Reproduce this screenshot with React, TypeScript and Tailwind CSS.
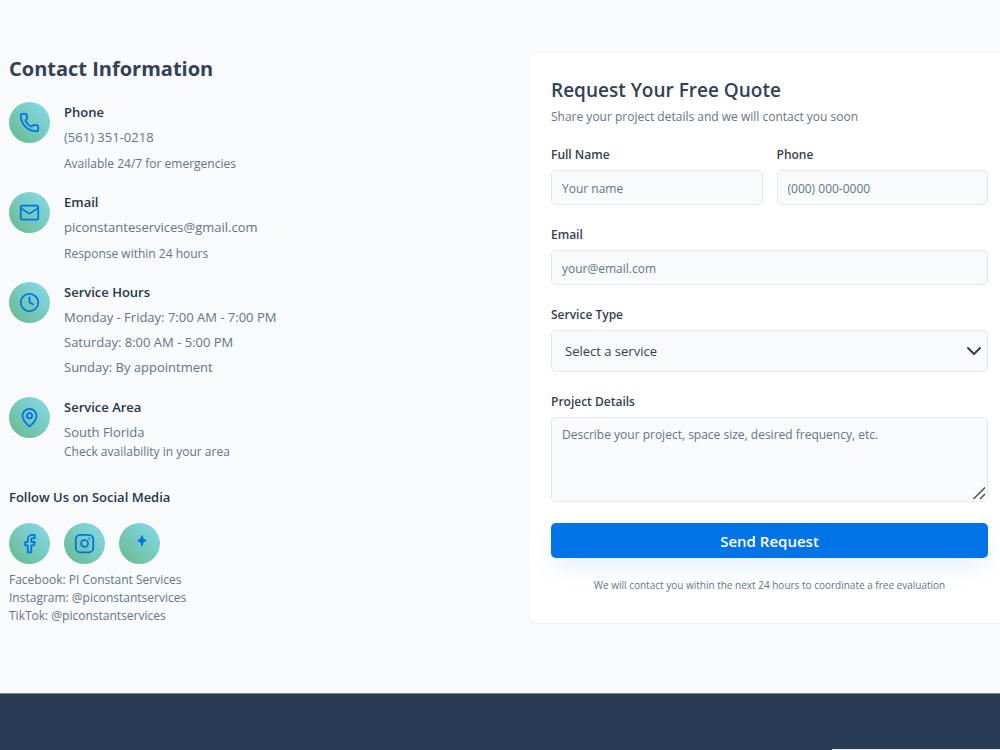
import { useState } from 'react'
import type { ReactNode } from 'react'
import { ChevronDown, Clock, Facebook, Instagram, Mail, MapPin, Phone } from 'lucide-react'

const services = ['Residential Cleaning', 'Commercial Cleaning', 'Deep Cleaning', 'Move In / Move Out']

const bubble =
  'flex size-[41px] shrink-0 items-center justify-center rounded-full bg-linear-to-tr from-[#68b88c] to-[#87dbee] text-[#0073e6]'
const label = 'mb-[6px] block text-xs leading-[18px] font-semibold text-[#334155]'
const field =
  'block w-full rounded-[5px] border border-[#e2e8f0] bg-[#f8fafc] text-[#334155] placeholder:text-[#64748b] outline-none focus:border-[#0073e6]'
const input = `${field} h-[35px] px-[10px] pt-px text-xs`

function ContactItem({ icon, title, children }: { icon: ReactNode; title: string; children: ReactNode }) {
  return (
    <li className="flex gap-[14px]">
      <div className={bubble}>{icon}</div>
      <div>
        <h3 className="mb-0.5 text-[13px] leading-[21px] font-semibold text-[#27364b]">{title}</h3>
        {children}
      </div>
    </li>
  )
}

function TikTokIcon() {
  return (
    <svg viewBox="0 0 21 21" className="size-[21px]" fill="currentColor">
      <path d="M13 2 C13.8 2 14 4.6 14.6 5.6 C15.4 6.6 17.5 6.8 17.5 7.6 C17.5 8.4 15.4 8.6 14.6 9.6 C14 10.6 13.8 13.4 13 13.4 C12.2 13.4 12 10.6 11.4 9.6 C10.6 8.6 8.5 8.4 8.5 7.6 C8.5 6.8 10.6 6.6 11.4 5.6 C12 4.6 12.2 2 13 2Z" />
    </svg>
  )
}

function ResizeGrip() {
  return (
    <svg
      viewBox="0 0 16 16"
      className="pointer-events-none absolute right-px bottom-px size-4 bg-[#f8fafc]"
      fill="none"
      stroke="#4b4f55"
      strokeWidth="1.5"
    >
      <path d="M2.5 14 L14 2.5 M9 14 L14 9" />
    </svg>
  )
}

export default function App() {
  const [service, setService] = useState('')

  return (
    <div className="min-h-screen overflow-x-hidden bg-[#f8fafc] font-['Open_Sans','Noto_Sans',sans-serif] text-[#64748b]">
      <section className="-mr-[9px] grid grid-cols-2 items-start gap-[42px] pt-[53px] pb-[68px] pl-[9px]">
        <div>
          <h2 className="mb-[17px] text-xl leading-8 font-bold text-[#334155]">Contact Information</h2>

          <ul className="space-y-[18px]">
            <ContactItem icon={<Phone size={21} />} title="Phone">
              <p className="text-[13px] leading-6">(561) 351-0218</p>
              <p className="mt-1 text-xs leading-[21px]">Available 24/7 for emergencies</p>
            </ContactItem>
            <ContactItem icon={<Mail size={21} />} title="Email">
              <p className="text-[13px] leading-6">piconstanteservices@gmail.com</p>
              <p className="mt-1 text-xs leading-[21px]">Response within 24 hours</p>
            </ContactItem>
            <ContactItem icon={<Clock size={21} />} title="Service Hours">
              <div className="space-y-px text-[13px] leading-6">
                <p>Monday - Friday: 7:00 AM - 7:00 PM</p>
                <p>Saturday: 8:00 AM - 5:00 PM</p>
                <p>Sunday: By appointment</p>
              </div>
            </ContactItem>
            <ContactItem icon={<MapPin size={21} />} title="Service Area">
              <p className="text-[13px] leading-6">South Florida</p>
              <p className="text-xs leading-4">Check availability in your area</p>
            </ContactItem>
          </ul>

          <h3 className="mt-[27px] mb-[15px] text-[13px] leading-[21px] font-semibold text-[#27364b]">
            Follow Us on Social Media
          </h3>
          <div className="mb-[7px] flex gap-[14px]">
            <a href="#facebook" aria-label="Facebook" className={bubble}>
              <Facebook size={21} />
            </a>
            <a href="#instagram" aria-label="Instagram" className={bubble}>
              <Instagram size={21} />
            </a>
            <a href="#tiktok" aria-label="TikTok" className={bubble}>
              <TikTokIcon />
            </a>
          </div>
          <div className="text-xs leading-[18px]">
            <p>Facebook: PI Constant Services</p>
            <p>Instagram: @piconstantservices</p>
            <p>TikTok: @piconstantservices</p>
          </div>
        </div>

        <div className="rounded-[7px] bg-white px-[21px] pt-[21px] pb-[29px] shadow-xs">
          <h2 className="text-[19px] leading-8 font-semibold text-[#334155]">Request Your Free Quote</h2>
          <p className="mb-[19px] text-xs leading-[21px]">Share your project details and we will contact you soon</p>

          <form className="space-y-[21px]" onSubmit={e => e.preventDefault()}>
            <div className="grid grid-cols-2 gap-[14px]">
              <div>
                <label htmlFor="name" className={label}>Full Name</label>
                <input id="name" placeholder="Your name" className={input} />
              </div>
              <div>
                <label htmlFor="phone" className={label}>Phone</label>
                <input id="phone" type="tel" placeholder="(000) 000-0000" className={input} />
              </div>
            </div>
            <div>
              <label htmlFor="email" className={label}>Email</label>
              <input id="email" type="email" placeholder="your@email.com" className={input} />
            </div>
            <div>
              <label htmlFor="service" className={label}>Service Type</label>
              <div className="relative">
                <select
                  id="service"
                  value={service}
                  onChange={e => setService(e.target.value)}
                  className={`${field} h-[42px] appearance-none px-[13px] pt-px text-[13px]`}
                >
                  <option value="">Select a service</option>
                  {services.map(s => (
                    <option key={s}>{s}</option>
                  ))}
                </select>
                <ChevronDown
                  size={24}
                  className="pointer-events-none absolute inset-y-0 right-[2px] my-auto text-[#334155]"
                />
              </div>
            </div>
            <div>
              <label htmlFor="details" className={label}>Project Details</label>
              <div className="relative">
                <textarea
                  id="details"
                  placeholder="Describe your project, space size, desired frequency, etc."
                  className={`${field} h-[85px] resize-y px-[10px] py-2 text-xs leading-[18px]`}
                />
                <ResizeGrip />
              </div>
            </div>
            <button
              type="submit"
              className="block h-[35px] w-full rounded-[5px] bg-[#0073e6] pt-px text-[15px] font-semibold text-white shadow-[0_9px_26px_-4px_rgba(0,115,230,0.15)]"
            >
              Send Request
            </button>
          </form>
          <p className="mt-[18px] text-center text-[10px] leading-[18px]">
            We will contact you within the next 24 hours to coordinate a free evaluation
          </p>
        </div>
      </section>

      <footer className="h-[57px] border-t border-[#7d8996] bg-[#283c55]" />
      <div className="fixed right-0 bottom-0 h-px w-[168px] bg-[#e0e7f1]" />
    </div>
  )
}
